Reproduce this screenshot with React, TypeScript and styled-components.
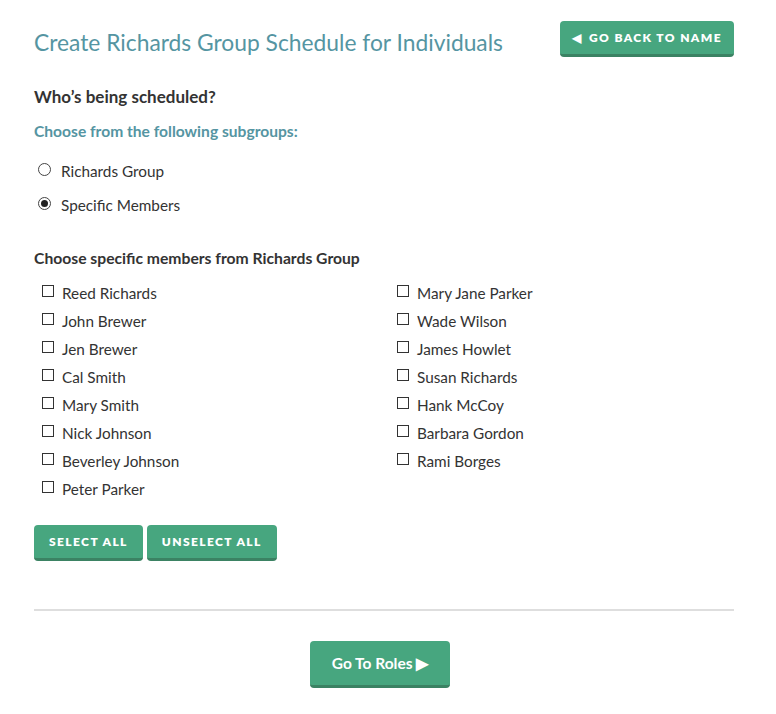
import React, { useState } from "react";
import styled, { createGlobalStyle } from "styled-components";

const Global = createGlobalStyle`
  html, body { margin: 0; padding: 0; background: #fff; }
  body { font-family: "Lato", "Open Sans", sans-serif; color: #333; }
  * { box-sizing: border-box; }
`;

const Page = styled.div`
  width: 776px;
  padding: 21px 42px 26px 34px;
`;

const Header = styled.div`
  display: flex;
  justify-content: space-between;
  align-items: flex-start;
`;

const Title = styled.h1`
  margin: 6px 0 0;
  font-size: 22.8px;
  font-weight: 400;
  color: #5595a2;
  line-height: 30px;
`;

const Button = styled.button<{ $pad?: number }>`
  border: none;
  border-bottom: 3px solid #3b8263;
  border-radius: 4px;
  background: #47a67f;
  color: #fff;
  font-family: "Lato", sans-serif;
  font-weight: 800;
  font-size: 12px;
  letter-spacing: 1.4px;
  text-transform: uppercase;
  height: 36px;
  padding: 0 ${(p) => p.$pad ?? 14}px;
  cursor: pointer;
  display: inline-flex;
  align-items: center;
  gap: 7px;
`;

const BigButton = styled(Button)`
  text-transform: none;
  letter-spacing: 0;
  font-size: 15.5px;
  font-weight: 700;
  height: 47px;
  padding: 0 22px;
`;

const Question = styled.h2`
  margin: 29px 0 0;
  font-size: 17px;
  font-weight: 700;
  color: #333;
  line-height: 22px;
`;

const SubLabel = styled.div`
  margin-top: 12px;
  font-size: 15.6px;
  font-weight: 700;
  color: #5595a2;
  line-height: 22px;
`;

const RadioList = styled.div`
  margin-top: 18px;
  display: flex;
  flex-direction: column;
  gap: 12px;
`;

const OptionRow = styled.label`
  display: flex;
  align-items: center;
  font-size: 15.3px;
  line-height: 22px;
  color: #333;
  cursor: pointer;
`;

const RadioDot = styled.span<{ $on?: boolean }>`
  width: 13px;
  height: 13px;
  border-radius: 50%;
  border: 1px solid #444;
  background: #fff;
  margin: 0 10px 0 4px;
  position: relative;
  top: -2px;
  display: inline-flex;
  align-items: center;
  justify-content: center;
  &::after {
    content: "";
    width: 7px;
    height: 7px;
    border-radius: 50%;
    background: ${(p) => (p.$on ? "#222" : "transparent")};
  }
`;

const SectionTitle = styled.h3`
  margin: 31px 0 0;
  font-size: 15.7px;
  font-weight: 700;
  color: #333;
  line-height: 22px;
`;

const Members = styled.div`
  margin-top: 13px;
  display: grid;
  grid-template-columns: 355px 1fr;
  padding-left: 8px;
`;

const Column = styled.div`
  display: flex;
  flex-direction: column;
  gap: 6px;
`;

const Box = styled.span<{ $on?: boolean }>`
  width: 12px;
  height: 12px;
  border: 1px solid #333;
  background: ${(p) => (p.$on ? "#333" : "#fff")};
  margin-right: 8px;
  position: relative;
  top: -2px;
  flex: none;
`;

const ButtonRow = styled.div`
  margin-top: 25px;
  display: flex;
  gap: 4px;
`;

const Divider = styled.hr`
  margin: 48px 0 0;
  border: none;
  border-top: 2px solid #dedede;
`;

const Footer = styled.div`
  margin-top: 30px;
  display: flex;
  justify-content: center;
  padding-right: 8px;
`;

const left = [
  "Reed Richards",
  "John Brewer",
  "Jen Brewer",
  "Cal Smith",
  "Mary Smith",
  "Nick Johnson",
  "Beverley Johnson",
  "Peter Parker",
];
const right = [
  "Mary Jane Parker",
  "Wade Wilson",
  "James Howlet",
  "Susan Richards",
  "Hank McCoy",
  "Barbara Gordon",
  "Rami Borges",
];

export default function App() {
  const [mode, setMode] = useState("specific");
  const [sel, setSel] = useState<Record<string, boolean>>({});
  const toggle = (n: string) => setSel((s) => ({ ...s, [n]: !s[n] }));
  const setAll = (v: boolean) => {
    const o: Record<string, boolean> = {};
    [...left, ...right].forEach((n) => (o[n] = v));
    setSel(o);
  };
  const renderCol = (list: string[]) => (
    <Column>
      {list.map((n) => (
        <OptionRow key={n} onClick={() => toggle(n)}>
          <Box $on={!!sel[n]} />
          {n}
        </OptionRow>
      ))}
    </Column>
  );
  return (
    <>
      <Global />
      <Page>
        <Header>
          <Title>Create Richards Group Schedule for Individuals</Title>
          <Button $pad={12}>
            <span>◀</span> Go Back to Name
          </Button>
        </Header>
        <Question>Who’s being scheduled?</Question>
        <SubLabel>Choose from the following subgroups:</SubLabel>
        <RadioList>
          <OptionRow onClick={() => setMode("group")}>
            <RadioDot $on={mode === "group"} />
            Richards Group
          </OptionRow>
          <OptionRow onClick={() => setMode("specific")}>
            <RadioDot $on={mode === "specific"} />
            Specific Members
          </OptionRow>
        </RadioList>
        <SectionTitle>Choose specific members from Richards Group</SectionTitle>
        <Members>
          {renderCol(left)}
          {renderCol(right)}
        </Members>
        <ButtonRow>
          <Button $pad={15} onClick={() => setAll(true)}>Select All</Button>
          <Button $pad={15} onClick={() => setAll(false)}>Unselect All</Button>
        </ButtonRow>
        <Divider />
        <Footer>
          <BigButton>Go To Roles ▶</BigButton>
        </Footer>
      </Page>
    </>
  );
}
